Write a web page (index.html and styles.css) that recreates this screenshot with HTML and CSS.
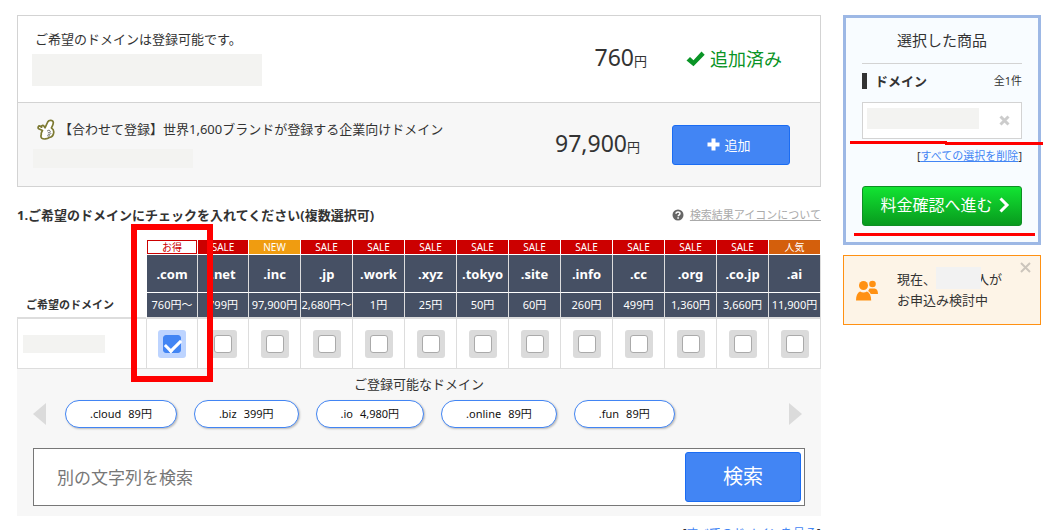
FILE: index.html
```
<!DOCTYPE html>
<html lang="ja">
<head>
<meta charset="utf-8">
<title>ドメイン検索結果</title>
<meta name="viewport" content="width=device-width, initial-scale=1">
<link rel="stylesheet" href="styles.css">
</head>
<body>
<div class="page">
  <main class="main">
    <section class="offers">
      <div class="offer">
        <div class="offer-info">
          <p class="offer-text">ご希望のドメインは登録可能です。</p>
          <span class="mask mask-large"></span>
        </div>
        <p class="price">760<small>円</small></p>
        <p class="added">
          <svg class="icon-check" viewBox="0 0 19 16" aria-hidden="true"><path d="M0.5 9.5 4 6l3.500 3.200L15.500 .5 18.700 3.700 7.500 15.300z" fill="currentColor"/></svg>
          追加済み
        </p>
      </div>
      <div class="offer offer-sub">
        <div class="offer-info">
          <p class="offer-text offer-pick">
            <svg class="icon-hand" viewBox="0 0 18 21" aria-hidden="true"><path d="M5.500 11.500 1.700 9.800C.5 8.800 1.300 6.600 3 7l1.600 1.200C4.500 6 6.600 5.800 7.200 7.600l.8 1.200L10.700 3C11.800.8 15.800.7 16.300 3.400c.2 1.700-1 3.800-1.900 5.600 1.700 1 2.600 2.500 2.300 4.700-.3 2.900-1.900 4.500-4.400 4.800-2.300 1.700-5.900 2-7.600.6-1-1-.9-2.300-.4-3.600-.5-1.400.6-2.700 1.200-4z" fill="#fff" stroke="#7d7a32" stroke-width="1.700" stroke-linejoin="round"/><path d="M10 12.300c1.400-1.800 3.700-1 3.200.8-.4 1.200-2 .8-2.100 0m-.3 2c1.400.6 2.700.2 3.300-.8m-3.900 2.300c1 .7 2.100.5 2.800-.1" fill="none" stroke="#555" stroke-width=".9"/></svg>
            【合わせて登録】世界1,600ブランドが登録する企業向けドメイン
          </p>
          <span class="mask mask-small"></span>
        </div>
        <p class="price">97,900<small>円</small></p>
        <button class="btn btn-add" type="button">
          <svg class="icon-plus" viewBox="0 0 13 13" aria-hidden="true"><path d="M4.500 .5h4v4h4v4h-4v4h-4v-4h-4v-4h4z" fill="currentColor"/></svg>
          追加
        </button>
      </div>
    </section>

    <header class="section-head">
      <h2>1.ご希望のドメインにチェックを入れてください(複数選択可)</h2>
      <div class="help">
        <svg class="icon-help" viewBox="0 0 12 12" aria-hidden="true"><circle cx="6" cy="6" r="5.500" fill="#666"/><path d="M4 4.700C4 2.300 8.100 2.400 8 4.600 8 5.900 6.200 5.800 6.200 7.300" fill="none" stroke="#fff" stroke-width="1.500"/><path d="M5.300 8.200h1.600v1.500H5.300z" fill="#fff"/></svg>
        <a href="#icons">検索結果アイコンについて</a>
      </div>
    </header>

    <div class="table-wrap">
      <table class="tlds">
        <colgroup><col class="col-name"><col class="col-first" span="2"><col span="11"></colgroup>
        <thead>
          <tr class="tags">
            <th class="row-title" rowspan="3" scope="col">ご希望のドメイン</th>
            <td><span class="tag tag-value">お得</span></td>
            <td><span class="tag">SALE</span></td>
            <td><span class="tag tag-new">NEW</span></td>
            <td><span class="tag">SALE</span></td>
            <td><span class="tag">SALE</span></td>
            <td><span class="tag">SALE</span></td>
            <td><span class="tag">SALE</span></td>
            <td><span class="tag">SALE</span></td>
            <td><span class="tag">SALE</span></td>
            <td><span class="tag">SALE</span></td>
            <td><span class="tag">SALE</span></td>
            <td><span class="tag">SALE</span></td>
            <td><span class="tag tag-hot">人気</span></td>
          </tr>
          <tr class="names">
            <th scope="col">.com</th><th scope="col">.net</th><th scope="col">.inc</th><th scope="col">.jp</th><th scope="col">.work</th><th scope="col">.xyz</th><th scope="col">.tokyo</th><th scope="col">.site</th><th scope="col">.info</th><th scope="col">.cc</th><th scope="col">.org</th><th scope="col">.co.jp</th><th scope="col">.ai</th>
          </tr>
          <tr class="prices">
            <td>760円～</td><td>799円</td><td>97,900円</td><td>2,680円～</td><td>1円</td><td>25円</td><td>50円</td><td>60円</td><td>260円</td><td>499円</td><td>1,360円</td><td>3,660円</td><td>11,900円</td>
          </tr>
        </thead>
        <tbody>
          <tr class="choices">
            <td class="name-cell"><span class="mask mask-name"></span></td>
            <td><label class="pick"><input type="checkbox" aria-label=".com" checked></label></td>
            <td><label class="pick"><input type="checkbox" aria-label=".net"></label></td>
            <td><label class="pick"><input type="checkbox" aria-label=".inc"></label></td>
            <td><label class="pick"><input type="checkbox" aria-label=".jp"></label></td>
            <td><label class="pick"><input type="checkbox" aria-label=".work"></label></td>
            <td><label class="pick"><input type="checkbox" aria-label=".xyz"></label></td>
            <td><label class="pick"><input type="checkbox" aria-label=".tokyo"></label></td>
            <td><label class="pick"><input type="checkbox" aria-label=".site"></label></td>
            <td><label class="pick"><input type="checkbox" aria-label=".info"></label></td>
            <td><label class="pick"><input type="checkbox" aria-label=".cc"></label></td>
            <td><label class="pick"><input type="checkbox" aria-label=".org"></label></td>
            <td><label class="pick"><input type="checkbox" aria-label=".co.jp"></label></td>
            <td><label class="pick"><input type="checkbox" aria-label=".ai"></label></td>
          </tr>
        </tbody>
      </table>
      <span class="marker-box"></span>
    </div>

    <section class="more">
      <h3>ご登録可能なドメイン</h3>
      <div class="carousel">
        <button class="arrow" type="button" aria-label="前へ"><svg viewBox="0 0 13 22" aria-hidden="true"><path d="M13 0v22L0 11z" fill="currentColor"/></svg></button>
        <div class="pills">
          <button class="pill" type="button"><span>.cloud</span><span>89円</span></button>
          <button class="pill" type="button"><span>.biz</span><span>399円</span></button>
          <button class="pill" type="button"><span>.io</span><span>4,980円</span></button>
          <button class="pill" type="button"><span>.online</span><span>89円</span></button>
          <button class="pill" type="button"><span>.fun</span><span>89円</span></button>
        </div>
        <button class="arrow arrow-next" type="button" aria-label="次へ"><svg viewBox="0 0 13 22" aria-hidden="true"><path d="M0 0v22l13-11z" fill="currentColor"/></svg></button>
      </div>
      <form class="search">
        <input type="text" placeholder="別の文字列を検索" aria-label="別の文字列を検索">
        <button class="btn btn-search" type="button">検索</button>
      </form>
    </section>
    <p class="all-link">[<a href="#all">すべてのドメインを見る</a>]</p>
  </main>

  <aside class="side">
    <section class="cart">
      <h2>選択した商品</h2>
      <div class="cart-head">
        <h3>ドメイン</h3>
        <span>全1件</span>
      </div>
      <div class="cart-item">
        <span class="mask mask-cart"></span>
        <button class="icon-button" type="button" aria-label="削除"><svg viewBox="0 0 11 11" aria-hidden="true"><path d="M1.500 1.500l8 8m0-8l-8 8" stroke="#ccc" stroke-width="3" fill="none"/></svg></button>
      </div>
      <p class="clear">[<a href="#clear">すべての選択を削除</a>]</p>
      <button class="btn-go" type="button">料金確認へ進む <svg viewBox="0 0 11 16" aria-hidden="true"><path d="M1.500 1.500 8 8l-6.500 6.500" fill="none" stroke="currentColor" stroke-width="3"/></svg></button>
      <svg class="marker-line marker-upper" viewBox="0 0 193 4" aria-hidden="true"><path d="M0 0h97v1h96v3H95V3H0z" fill="#f00"/></svg>
      <span class="marker-line marker-lower"></span>
    </section>
    <section class="notice">
      <svg class="icon-people" viewBox="0 0 22 21" aria-hidden="true"><g fill="#ff9113"><circle cx="16.500" cy="4" r="3.300"/><path d="M13.500 8.500h5c2.300 0 3.500 2.200 3.500 5.500h-7.200c-.7-1.500-2-2.300-2.600-2.900z"/></g><circle cx="7.500" cy="6" r="5" fill="#fdf4e7"/><g fill="#ff9113"><circle cx="7.500" cy="5.500" r="4.500"/><path d="M0 20.500c0-4.500 1.300-7.800 4-9 2.300 1.200 4.700 1.200 7 0 2.800 1.200 4.200 4.500 4.200 9z"/></g></svg>
      <p>現在、<span class="count">人が<span class="mask mask-count"></span></span><br>お申込み検討中</p>
      <button class="icon-button notice-close" type="button" aria-label="閉じる"><svg viewBox="0 0 11 11" aria-hidden="true"><path d="M1 1l9 9m0-9l-9 9" stroke="#ccc5bc" stroke-width="2" fill="none"/></svg></button>
    </section>
  </aside>
</div>
</body>
</html>
```
FILE: styles.css
```
* { box-sizing: border-box; }
body {
  margin: 0;
  color: #333;
  background: #fff;
  font: 13px/20px "Noto Sans", "Noto Sans CJK JP", sans-serif;
}
h2, h3, p { margin: 0; font-weight: 400; }
button, input { font: inherit; color: inherit; }
button { padding: 0; border: 0; background: none; cursor: pointer; }
svg { display: block; flex: none; }
a { color: #4285f4; }

.page { display: flex; align-items: flex-start; gap: 22px; padding: 15px 14px 0 17px; }
.main { flex: 1; min-width: 0; }
.side { flex: none; width: 198px; }
.mask { display: block; background: #f3f3f1; }

.offers { border: 1px solid #d3d3d3; }
.offer { display: flex; align-items: center; min-height: 86px; padding: 0 30px 0 14px; }
.offer-sub { min-height: 84px; padding-left: 15px; border-top: 1px solid #d3d3d3; background: #f7f7f7; }
.offer-info { flex: 1; padding-bottom: 3px; }
.offer-text { padding-left: 3px; }
.offer-pick { display: flex; align-items: center; gap: 4px; padding-left: 4px; white-space: nowrap; }
.icon-hand { width: 18px; height: 21px; }
.mask-large { width: 230px; height: 32px; margin-top: 5px; }
.mask-small { width: 160px; height: 19px; margin-top: 9px; }
.price { font-size: 23px; line-height: 30px; }
.price small { font-size: 13px; }
.added { display: flex; align-items: center; gap: 5px; width: 104px; margin: 0 0 0 39px; color: #0a9426; font-size: 18px; line-height: 26px; white-space: nowrap; }
.icon-check { width: 19px; height: 16px; }
.btn { border: 1px solid #1a6cf3; border-radius: 3px; background: #4285f4; color: #fff; }
.btn-add { display: flex; align-items: center; justify-content: center; gap: 4px; width: 118px; height: 40px; margin-left: 32px; padding-right: 4px; }
.icon-plus { width: 13px; height: 13px; }

.section-head { display: flex; align-items: center; justify-content: space-between; padding: 18px 0 15px; }
.section-head h2 { font-size: 13px; font-weight: 700; }
.help { display: flex; align-items: center; gap: 6px; font-size: 11px; }
.help a { color: #aaa; }
.icon-help { width: 12px; height: 12px; }

.table-wrap { position: relative; }
.tlds { width: 100%; table-layout: fixed; border-collapse: separate; border-spacing: 0; text-align: center; }
.tlds th, .tlds td { padding: 0; border-right: 1px solid #ddd; white-space: nowrap; }
.col-name { width: 130px; }
.col-first { width: 51px; }
.tlds .row-title { padding: 0 0 2px 9px; border-right-color: #fff; border-bottom: 2px solid #ddd; vertical-align: bottom; text-align: left; font-size: 11px; font-weight: 700; }
.tlds .tags td { border-color: #fff; }
.tlds .tags td, .tlds .names th { border-bottom: 1px solid #fff; }
.tag { display: block; height: 14px; background: #c00; color: #fff; font-size: 10px; line-height: 14px; }
.tag-value { border: 1px solid #c00; background: #fff; color: #c00; line-height: 12px; }
.tag-new { background: #f09c10; }
.tag-hot { background: #d45f0c; }
.tlds .names th { height: 38px; background: #465064; color: #fff; font-size: 13px; font-weight: 700; line-height: 20px; }
.tlds .prices td { height: 26px; border-bottom: 2px solid #ddd; background: #465064; color: #fff; font-size: 11px; line-height: 16px; }
.tlds .choices td { height: 50px; border-bottom: 1px solid #ddd; }
.tlds .choices .name-cell { padding-left: 5px; border-left: 1px solid #ddd; }
.mask-name { width: 82px; height: 18px; }
.pick { display: flex; align-items: center; justify-content: center; width: 28px; height: 28px; margin: 0 auto; border-radius: 3px; background: #dbdbdb; }
.pick:has(:checked) { background: #bdd4ff; }
.pick input { appearance: none; width: 18px; height: 18px; margin: 0; border: 1px solid #aaa; border-radius: 3px; background: #fff; }
.pick input:checked { border-color: #4285f4; background: #4285f4; }
.pick input:checked::before { content: ""; display: block; width: 13px; height: 7px; margin: 3px 1px; border: solid #fff; border-width: 0 0 3px 3px; transform: rotate(-45deg); }
.marker-box { position: absolute; top: -16px; left: 114px; width: 82px; height: 158px; border: 6px solid #f00; }

.more { padding: 5px 16px 10px; background: #f7f7f7; }
.more h3 { font-size: 13px; text-align: center; }
.carousel { display: flex; align-items: center; padding-top: 6px; }
.arrow { width: 13px; height: 22px; color: #dbdbdb; }
.pills { display: flex; flex: 1; gap: 17px; padding: 0 19px; }
.pill { display: flex; justify-content: center; gap: 7px; height: 28px; padding: 0 24px; border: 1px solid #4285f4; border-radius: 14px; background: #fff; box-shadow: 1px 1px 2px #bbb; color: #111; font-size: 11px; line-height: 26px; white-space: nowrap; }
.arrow-next { margin-right: 3px; }
.search { display: flex; align-items: center; margin-top: 20px; padding: 3px; border: 1px solid #777; background: #fff; }
.search input { flex: 1; min-width: 0; height: 50px; padding: 0 20px; border: 0; outline: 0; background: none; font-size: 17px; }
.search input::placeholder { color: #777; opacity: 1; }
.btn-search { width: 116px; height: 50px; font-size: 20px; }
.all-link { margin-top: 8px; font-size: 12px; text-align: right; }

.cart { position: relative; padding: 12px 16px 16px; border: 3px solid #9db8e5; background: #f8fcff; }
.cart h2 { padding-bottom: 13px; border-bottom: 1px solid #d3d3d3; font-size: 15px; text-align: center; }
.cart-head { display: flex; align-items: center; justify-content: space-between; padding: 7px 0 11px; font-size: 11px; }
.cart-head h3 { padding-left: 8px; border-left: 5px solid #333; font-size: 13px; font-weight: 700; line-height: 16px; }
.cart-item { display: flex; align-items: center; justify-content: space-between; height: 37px; padding: 0 11px 4px 4px; border: 1px solid #d3d3d3; background: #fff; }
.mask-cart { width: 112px; height: 21px; }
.icon-button { width: 11px; height: 11px; }
.cart-item .icon-button { margin-top: 4px; }
.clear { padding-top: 7px; font-size: 11px; text-align: right; }
.btn-go { display: flex; align-items: center; justify-content: center; gap: 6px; width: 100%; height: 40px; margin-top: 20px; padding: 0 0 2px 6px; border: 1px solid #0e8f24; border-radius: 3px; background: linear-gradient(#12e432, #089a1e); color: #fff; font-size: 16px; white-space: nowrap; }
.btn-go svg { width: 11px; height: 16px; }
.marker-line { position: absolute; height: 3px; }
.marker-upper { top: 123px; left: 4px; width: 193px; height: 4px; }
.marker-lower { bottom: 6px; left: 8px; width: 181px; background: #f00; }

.notice { position: relative; display: flex; align-items: center; gap: 19px; margin-top: 10px; padding: 13px 12px 13px; border: 1px solid #ff9113; background: #fdf4e7; }
.notice p { line-height: 21px; }
.icon-people { width: 22px; height: 21px; }
.count { position: relative; padding-left: 40px; }
.mask-count { position: absolute; top: -3px; left: 0; width: 45px; height: 22px; background: #f2f2f2; }
.notice-close { position: absolute; top: 6px; right: 9px; }
```
